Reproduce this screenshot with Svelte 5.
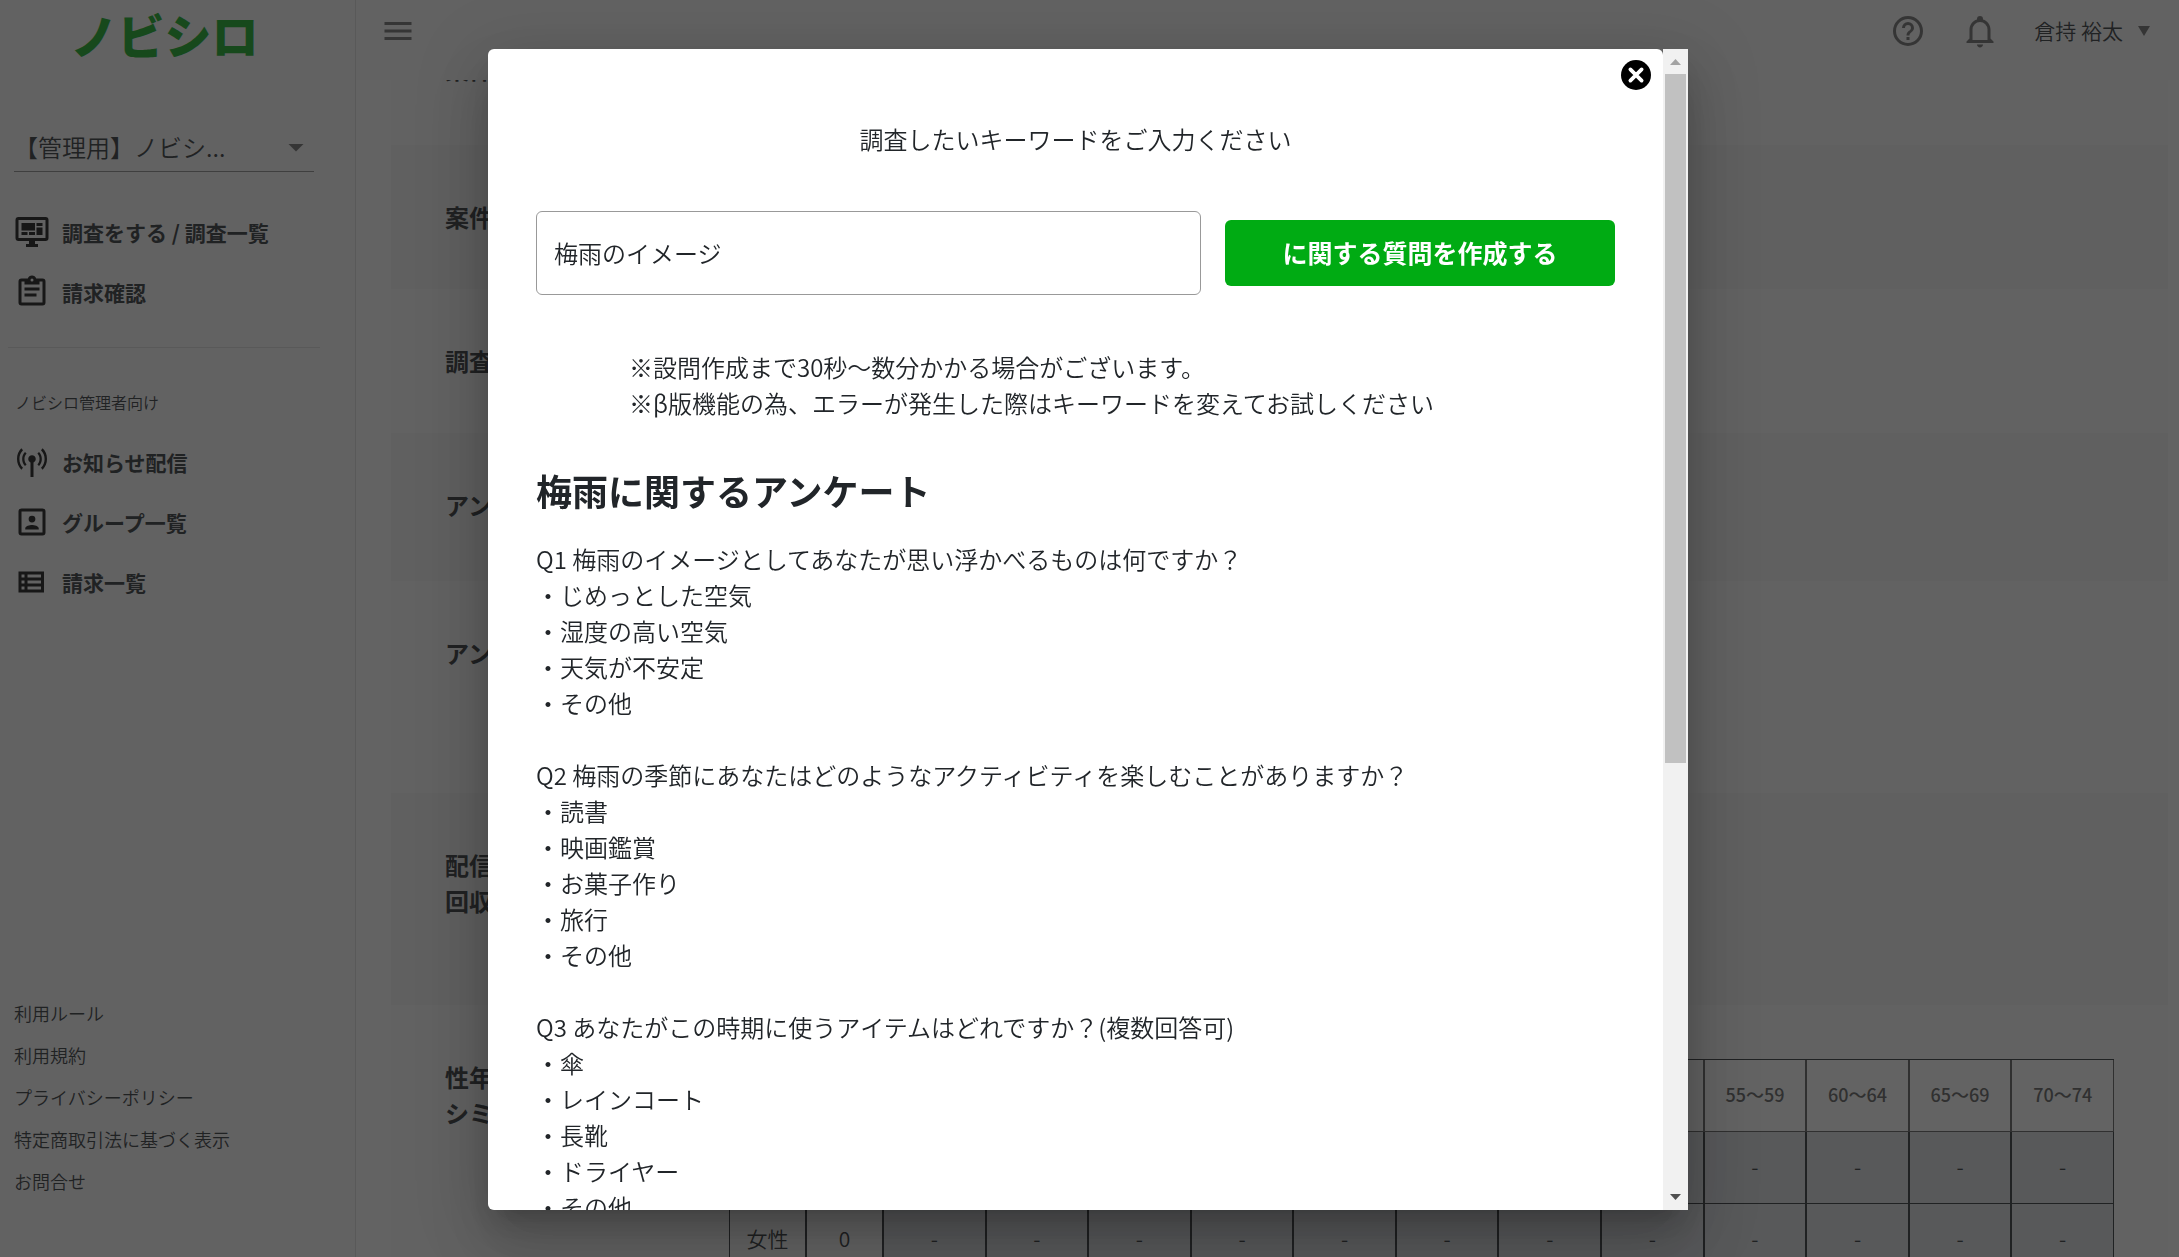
<script>
  const mainNav = [
    { icon: 'monitor', label: '調査をする / 調査一覧' },
    { icon: 'clipboard', label: '請求確認' },
  ];
  const adminNav = [
    { icon: 'antenna', label: 'お知らせ配信' },
    { icon: 'account', label: 'グループ一覧' },
    { icon: 'list', label: '請求一覧' },
  ];
  const icons = {
    monitor:
      'M21 16V4H3v12h18m0-14a2 2 0 0 1 2 2v12a2 2 0 0 1-2 2h-7v2h2v2H8v-2h2v-2H3a2 2 0 0 1-2-2V4a2 2 0 0 1 2-2h18M5 6h9v5H5V6m10 0h4v2h-4V6m4 3v5h-4V9h4M5 12h4v2H5v-2m5 0h4v2h-4v-2Z',
    clipboard:
      'M19 3h-4.18C14.4 1.84 13.3 1 12 1s-2.4.84-2.82 2H5a2 2 0 0 0-2 2v14a2 2 0 0 0 2 2h14a2 2 0 0 0 2-2V5a2 2 0 0 0-2-2m-7 0a1 1 0 0 1 1 1 1 1 0 0 1-1 1 1 1 0 0 1-1-1 1 1 0 0 1 1-1M7 7h10V5h2v14H5V5h2v2m10 4H7V9h10v2m-2 4H7v-2h8v2Z',
    antenna:
      'M12 7.5c.69 0 1.27.24 1.76.73.49.5.74 1.08.74 1.77 0 .49-.13.94-.39 1.36-.26.41-.63.72-1.11.91V22h-2v-9.73c-.48-.19-.85-.5-1.11-.91A2.5 2.5 0 0 1 9.5 10c0-.69.25-1.27.74-1.77.49-.49 1.07-.73 1.76-.73m4.69-2.19C17.94 6.56 18.56 8.13 18.56 10s-.62 3.44-1.87 4.69l-1.08-1.08c.94-.98 1.41-2.18 1.41-3.61s-.47-2.63-1.41-3.61l1.08-1.08m-9.38 0 1.08 1.08C7.45 7.37 6.98 8.57 6.98 10s.47 2.63 1.41 3.61l-1.08 1.08C6.06 13.44 5.44 11.87 5.44 10s.62-3.44 1.87-4.69M19.1 2.9C21.03 4.83 22 7.2 22 10s-.97 5.17-2.9 7.1l-1.1-1.2c1.62-1.6 2.4-3.56 2.4-5.9s-.78-4.3-2.4-5.9l1.1-1.2M4.9 2.9 6 4.1C4.38 5.7 3.6 7.66 3.6 10s.78 4.3 2.4 5.9l-1.1 1.2C2.97 15.17 2 12.8 2 10s.97-5.17 2.9-7.1Z',
    account:
      'M19 19H5V5h14m0-2H5a2 2 0 0 0-2 2v14a2 2 0 0 0 2 2h14a2 2 0 0 0 2-2V5a2 2 0 0 0-2-2m-2.500 13.250c0-1.500-3-2.250-4.500-2.250s-4.500.75-4.500 2.250V17h9m-4.500-4.750A2.250 2.250 0 0 0 14.250 10 2.250 2.250 0 0 0 12 7.750 2.250 2.250 0 0 0 9.750 10 2.250 2.250 0 0 0 12 12.250Z',
    list:
      'M3 5v14h17V5H3m4 2v2H5V7h2m-2 6v-2h2v2H5m0 2h2v2H5v-2m13 2H9v-2h9v2m0-4H9v-2h9v2m0-4H9V7h9v2Z',
  };
  const footerLinks = ['利用ルール', '利用規約', 'プライバシーポリシー', '特定商取引法に基づく表示', 'お問合せ'];
  const sections = [
    { lines: ['案件名'], size: 'normal' },
    { lines: ['調査目的'], size: 'normal' },
    { lines: ['アンケート形式'], size: 'medium' },
    { lines: ['アンケート内容'], size: 'tall' },
    { lines: ['配信条件', '回収数'], size: 'tall' },
  ];
  const ages = ['15〜19', '20〜24', '25〜29', '30〜34', '35〜39', '40〜44', '45〜49', '50〜54', '55〜59', '60〜64', '65〜69', '70〜74'];
  const questions = [
    {
      title: 'Q1 梅雨のイメージとしてあなたが思い浮かべるものは何ですか？',
      options: ['じめっとした空気', '湿度の高い空気', '天気が不安定', 'その他'],
    },
    {
      title: 'Q2 梅雨の季節にあなたはどのようなアクティビティを楽しむことがありますか？',
      options: ['読書', '映画鑑賞', 'お菓子作り', '旅行', 'その他'],
    },
    {
      title: 'Q3 あなたがこの時期に使うアイテムはどれですか？(複数回答可)',
      options: ['傘', 'レインコート', '長靴', 'ドライヤー', 'その他'],
    },
  ];
  let keyword = $state('梅雨のイメージ');
</script>

{#snippet navList(items)}
  <ul class="nav">
    {#each items as item}
      <li>
        <a href="#top">
          <svg viewBox="0 0 24 24" aria-hidden="true"><path fill-rule="evenodd" d={icons[item.icon]} /></svg>
          {item.label}
        </a>
      </li>
    {/each}
  </ul>
{/snippet}

<div class="app">
  <aside class="sidebar">
    <a class="logo" href="#top">ノビシロ</a>
    <button class="group-select" type="button" aria-label="グループを選択">
      <span>【管理用】ノビシ...</span>
      <svg viewBox="0 0 24 24" aria-hidden="true"><path d="M7 10l5 5 5-5Z" /></svg>
    </button>
    {@render navList(mainNav)}
    <hr />
    <p class="caption">ノビシロ管理者向け</p>
    {@render navList(adminNav)}
    <ul class="footer-links">
      {#each footerLinks as link}
        <li><a href="#top">{link}</a></li>
      {/each}
    </ul>
  </aside>

  <div class="content">
    <header>
      <button class="icon-button" type="button" aria-label="メニュー">
        <svg viewBox="0 0 24 24"><path d="M3 6h18v2H3V6m0 5h18v2H3v-2m0 5h18v2H3v-2Z" /></svg>
      </button>
      <div class="account">
        <button class="icon-button" type="button" aria-label="ヘルプ">
          <svg viewBox="0 0 24 24"><path d="M11 18h2v-2h-2v2m1-16A10 10 0 0 0 2 12a10 10 0 0 0 10 10 10 10 0 0 0 10-10A10 10 0 0 0 12 2m0 18c-4.410 0-8-3.590-8-8s3.590-8 8-8 8 3.590 8 8-3.590 8-8 8m0-14a4 4 0 0 0-4 4h2a2 2 0 0 1 2-2 2 2 0 0 1 2 2c0 2-3 1.750-3 5h2c0-2.250 3-2.500 3-5a4 4 0 0 0-4-4Z" /></svg>
        </button>
        <button class="icon-button" type="button" aria-label="お知らせ">
          <svg viewBox="0 0 24 24"><path d="M10 21h4c0 1.100-.9 2-2 2s-2-.9-2-2m11-2v1H3v-1l2-2v-6c0-3.100 2.030-5.830 5-6.710V4a2 2 0 0 1 2-2 2 2 0 0 1 2 2v.29c2.970.88 5 3.610 5 6.710v6l2 2m-4-8a5 5 0 0 0-5-5 5 5 0 0 0-5 5v7h10v-7Z" /></svg>
        </button>
        <button class="user" type="button">
          倉持 裕太
          <svg viewBox="0 0 12 12" aria-hidden="true"><path d="M0 2h12L6 12Z" /></svg>
        </button>
      </div>
    </header>

    <main>
      <section class="row medium scrolled"><h2>案件種別</h2></section>
      {#each sections as section}
        <section class="row {section.size}">
          <h2>{#each section.lines as line}<span>{line}</span>{/each}</h2>
        </section>
      {/each}
      <section class="row last">
        <h2><span>性年代別</span><span>シミュレーション</span></h2>
        <div class="table-area">
          <table>
            <thead>
              <tr>
                <th class="narrow"></th>
                <th class="narrow"></th>
                {#each ages as age}<th>{age}</th>{/each}
              </tr>
            </thead>
            <tbody>
              {#each ['男性', '女性'] as sex}
                <tr>
                  <td class="plain">{sex}</td>
                  <td class="plain">0</td>
                  {#each ages as _}<td>-</td>{/each}
                </tr>
              {/each}
            </tbody>
          </table>
        </div>
      </section>
    </main>
  </div>
</div>

<div class="overlay">
  <div class="dialog" role="dialog" aria-modal="true" aria-labelledby="dialog-title">
    <div class="dialog-body">
      <button class="close" type="button" aria-label="閉じる">
        <svg viewBox="0 0 24 24"><circle cx="12" cy="12" r="12" /><path d="M7.500 7.500l9 9m0-9l-9 9" /></svg>
      </button>
      <p class="lead"><label id="dialog-title" for="keyword">調査したいキーワードをご入力ください</label></p>
      <form class="search">
        <input id="keyword" type="text" bind:value={keyword} />
        <button type="button">に関する質問を作成する</button>
      </form>
      <p class="notes">
        ※設問作成まで30秒〜数分かかる場合がございます。<br />
        ※β版機能の為、エラーが発生した際はキーワードを変えてお試しください
      </p>
      <h1>梅雨に関するアンケート</h1>
      {#each questions as question}
        <div class="question">
          <p>{question.title}</p>
          <ul>
            {#each question.options as option}<li>・{option}</li>{/each}
          </ul>
        </div>
      {/each}
    </div>
    <div class="scrollbar" aria-hidden="true">
      <svg viewBox="0 0 25 25"><path class="off" d="M12.500 10l5.500 6h-11z" /></svg>
      <div class="track"><div class="thumb"></div></div>
      <svg viewBox="0 0 25 25"><path d="M12.500 15l5.500-6h-11z" /></svg>
    </div>
  </div>
</div>

<style>
  :global(body) {
    margin: 0;
    overflow: hidden;
    color: #212529;
    font-family: 'Noto Sans CJK JP', sans-serif;
    font-size: 24px;
    font-weight: 350;
    line-height: 36px;
  }
  * {
    box-sizing: border-box;
  }
  p, h1, h2, ul {
    margin: 0;
    padding: 0;
    list-style: none;
  }
  a {
    color: inherit;
    text-decoration: none;
  }
  button, input {
    margin: 0;
    padding: 0;
    border: 0;
    background: none;
    color: inherit;
    font: inherit;
  }
  svg {
    display: block;
    flex: none;
  }
  .app {
    display: flex;
    height: 100vh;
    overflow: hidden;
    background: #fff;
  }

  .sidebar {
    display: flex;
    flex: none;
    flex-direction: column;
    width: 356px;
    border-right: 1px solid #dcdcdc;
    background: #fafafa;
  }
  .logo {
    height: 68px;
    padding-right: 26px;
    color: #00a713;
    font-size: 47px;
    font-weight: 900;
    line-height: 68px;
    text-align: center;
  }
  .group-select {
    display: flex;
    align-items: center;
    justify-content: space-between;
    height: 50px;
    margin: 54px 41px 0 14px;
    border-bottom: 1px solid #888;
  }
  .group-select svg {
    width: 36px;
    height: 36px;
    fill: #666;
  }
  .nav {
    margin: 30px 0 0 14px;
  }
  .nav a {
    display: flex;
    align-items: center;
    gap: 12px;
    height: 60px;
    font-size: 21px;
    font-weight: 700;
  }
  .nav svg {
    width: 36px;
    height: 36px;
  }
  hr {
    width: 312px;
    margin: 25px 0 0 8px;
    border: 0;
    border-top: 1px solid #dcdcdc;
  }
  .caption {
    margin: 36px 0 0 15px;
    font-size: 16px;
  }
  .caption + .nav {
    margin-top: 12px;
  }
  .footer-links {
    margin: auto 0 55px 14px;
    font-size: 18px;
    line-height: 42px;
  }

  .content {
    display: flex;
    flex: 1;
    flex-direction: column;
    min-width: 0;
  }
  header {
    display: flex;
    flex: none;
    justify-content: space-between;
    height: 80px;
    padding: 13px 29px 0 24px;
    background: #fafafa;
  }
  header svg {
    width: 36px;
    height: 36px;
    fill: #666;
  }
  .icon-button {
    height: 36px;
  }
  .account {
    display: flex;
    gap: 36px;
  }
  .user {
    display: flex;
    align-items: center;
    gap: 15px;
    height: 34px;
    font-size: 21px;
    line-height: 34px;
  }
  .user svg {
    width: 12px;
    height: 12px;
  }
  main {
    flex: 1;
    margin: 0 11px 0 35px;
    overflow: hidden;
  }
  .row {
    display: flex;
    min-height: 144px;
    padding: 54px;
    background: #fafafa;
  }
  .row:nth-child(even) {
    background: #f5f5f5;
  }
  .row h2 {
    width: 230px;
    flex: none;
    font-size: 24px;
    font-weight: 700;
    white-space: nowrap;
  }
  .row h2 span {
    display: block;
  }
  .row.medium {
    min-height: 148px;
  }
  .row.scrolled {
    margin-top: -83px;
  }
  .row.tall {
    min-height: 212px;
  }
  .last {
    height: 400px;
  }
  .table-area {
    flex: 1;
    padding-left: 54px;
  }
  table {
    width: 100%;
    border-top: 1px solid;
    border-collapse: separate;
    border-spacing: 0;
    table-layout: fixed;
    font-size: 21px;
  }
  th, td {
    height: 72px;
    padding: 0 0 4px;
    border: 1px solid;
    border-top: 0;
    background: #fff;
    text-align: center;
  }
  th {
    color: #555;
    font-size: 18px;
    font-weight: 500;
  }
  td {
    background: #d9dce1;
  }
  td.plain {
    background: #fff;
  }
  .narrow {
    width: 77px;
  }

  .overlay {
    position: fixed;
    inset: 0;
    display: flex;
    justify-content: center;
    padding: 49px 3px 47px 0;
    background: rgb(33 33 33 / 70%);
  }
  .dialog {
    display: flex;
    width: 1200px;
    border-radius: 6px 0 0 6px;
    box-shadow:
      0 16px 22px -10px rgb(0 0 0 / 20%),
      0 36px 57px 4px rgb(0 0 0 / 14%),
      0 13px 69px 12px rgb(0 0 0 / 12%);
  }
  .dialog-body {
    position: relative;
    flex: 1;
    padding: 72px 48px 0;
    border-radius: 6px 6px 0 6px;
    overflow: hidden;
    background: #fff;
  }
  .close {
    position: absolute;
    top: 11px;
    right: 12px;
  }
  .close svg {
    width: 30px;
    height: 30px;
  }
  .close path {
    fill: none;
    stroke: #fff;
    stroke-width: 3;
    stroke-linecap: round;
  }
  .lead {
    text-align: center;
  }
  .search {
    display: flex;
    align-items: center;
    gap: 24px;
    margin-top: 54px;
  }
  .search input {
    flex: 1;
    min-width: 0;
    height: 84px;
    padding: 0 17px 2px;
    border: 1px solid #999;
    border-radius: 6px;
  }
  .search button {
    width: 390px;
    height: 66px;
    padding-bottom: 2px;
    border-radius: 6px;
    background: #00ab13;
    color: #fff;
    font-size: 25px;
    font-weight: 700;
  }
  .notes {
    margin: 54px 0 0 93px;
  }
  h1 {
    margin: 42px 0 24px;
    font-size: 36px;
    font-weight: 700;
    line-height: 54px;
  }
  .question {
    margin-bottom: 36px;
  }
  .scrollbar {
    display: flex;
    flex: none;
    flex-direction: column;
    width: 25px;
    background: #f1f1f1;
    fill: #505050;
  }
  .scrollbar .off {
    fill: #a3a3a3;
  }
  .track {
    flex: 1;
    padding: 0 2px;
  }
  .thumb {
    height: 62%;
    background: #c1c1c1;
  }
</style>
